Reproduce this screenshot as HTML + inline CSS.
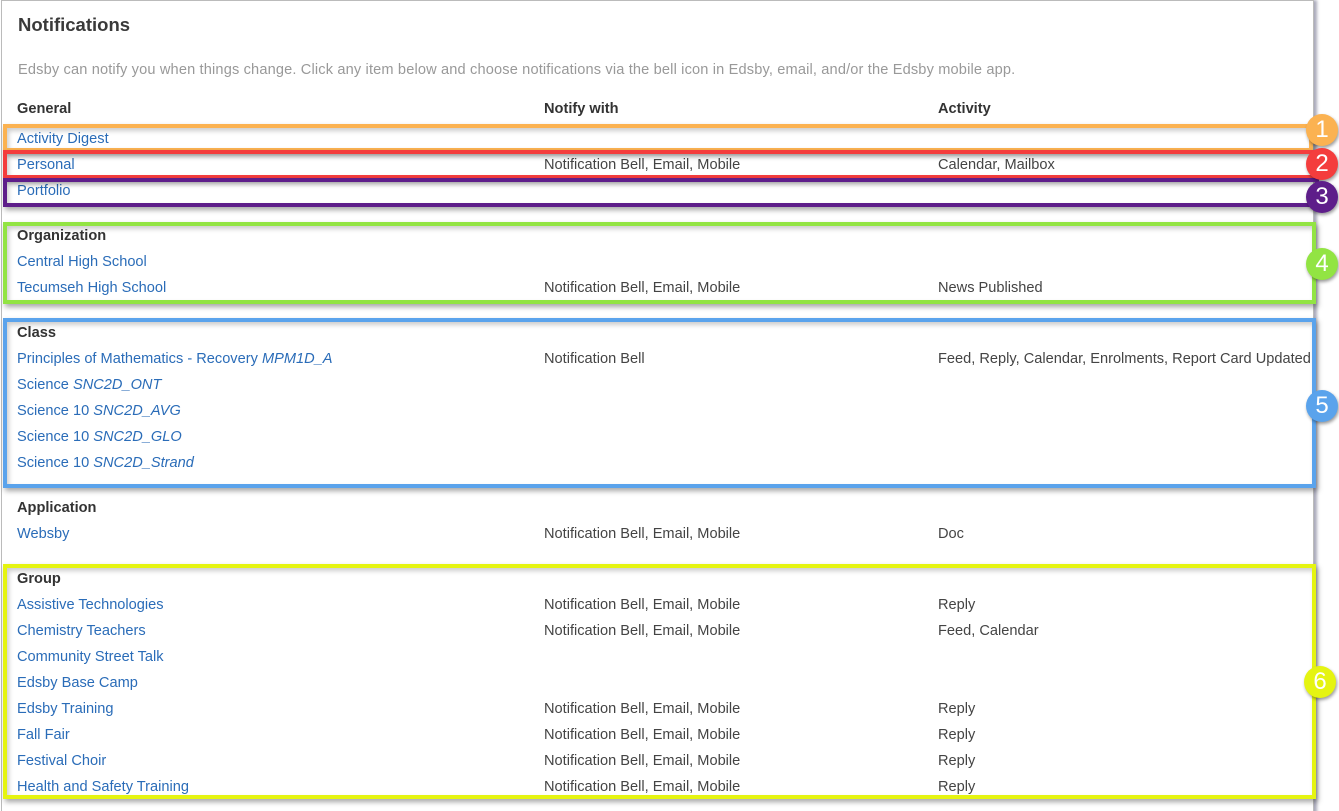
<!DOCTYPE html>
<html><head><meta charset="utf-8"><style>
html,body{margin:0;padding:0;background:#fff;width:1339px;height:811px;overflow:hidden;position:relative;font-family:"Liberation Sans",sans-serif;font-size:14.6px;}
.card{position:absolute;left:1px;top:0;width:1311px;height:830px;border:1px solid #bbb;border-bottom:none;background:#fff;box-shadow:3px 0 3px #aab}
.t{position:absolute;line-height:18px;white-space:nowrap;color:#444;margin-top:1px}
.l{color:#2a6cb8}
.h{color:#333;font-weight:bold}
i{font-style:italic}
.b{position:absolute;box-sizing:border-box;border:4px solid;box-shadow:2px 3px 5px rgba(0,0,0,.35), inset 2px 3px 5px rgba(0,0,0,.2)}
.c{position:absolute;width:32px;height:32px;border-radius:50%;color:#fff;font-size:24px;line-height:32px;text-align:center;box-shadow:1px 2px 3px rgba(0,0,0,.4)}
</style></head><body>
<div class="card"></div>
<div class="t" style="left:18px;top:12px;font-size:18.5px;line-height:24px;color:#3a3a3a;font-weight:bold">Notifications</div>
<div class="t" style="left:18px;top:60px;color:#999;letter-spacing:0.15px">Edsby can notify you when things change. Click any item below and choose notifications via the bell icon in Edsby, email, and/or the Edsby mobile app.</div>
<div class="t h" style="left:17px;top:99px">General</div>
<div class="t h" style="left:544px;top:99px">Notify with</div>
<div class="t h" style="left:938px;top:99px">Activity</div>

<div class="t l" style="left:17px;top:129px">Activity Digest</div>
<div class="t l" style="left:17px;top:155px">Personal</div>
<div class="t" style="left:544px;top:155px">Notification Bell, Email, Mobile</div>
<div class="t" style="left:938px;top:155px">Calendar, Mailbox</div>
<div class="t l" style="left:17px;top:181px">Portfolio</div>

<div class="t h" style="left:17px;top:226px">Organization</div>
<div class="t l" style="left:17px;top:252px">Central High School</div>
<div class="t l" style="left:17px;top:278px">Tecumseh High School</div>
<div class="t" style="left:544px;top:278px">Notification Bell, Email, Mobile</div>
<div class="t" style="left:938px;top:278px">News Published</div>

<div class="t h" style="left:17px;top:323px">Class</div>
<div class="t l" style="left:17px;top:349px">Principles of Mathematics - Recovery <i>MPM1D_A</i></div>
<div class="t" style="left:544px;top:349px">Notification Bell</div>
<div class="t" style="left:938px;top:349px">Feed, Reply, Calendar, Enrolments, Report Card Updated</div>
<div class="t l" style="left:17px;top:375px">Science <i>SNC2D_ONT</i></div>
<div class="t l" style="left:17px;top:401px">Science 10 <i>SNC2D_AVG</i></div>
<div class="t l" style="left:17px;top:427px">Science 10 <i>SNC2D_GLO</i></div>
<div class="t l" style="left:17px;top:453px">Science 10 <i>SNC2D_Strand</i></div>

<div class="t h" style="left:17px;top:498px">Application</div>
<div class="t l" style="left:17px;top:524px">Websby</div>
<div class="t" style="left:544px;top:524px">Notification Bell, Email, Mobile</div>
<div class="t" style="left:938px;top:524px">Doc</div>

<div class="t h" style="left:17px;top:569px">Group</div>
<div class="t l" style="left:17px;top:595px">Assistive Technologies</div>
<div class="t" style="left:544px;top:595px">Notification Bell, Email, Mobile</div>
<div class="t" style="left:938px;top:595px">Reply</div>
<div class="t l" style="left:17px;top:621px">Chemistry Teachers</div>
<div class="t" style="left:544px;top:621px">Notification Bell, Email, Mobile</div>
<div class="t" style="left:938px;top:621px">Feed, Calendar</div>
<div class="t l" style="left:17px;top:647px">Community Street Talk</div>
<div class="t l" style="left:17px;top:673px">Edsby Base Camp</div>
<div class="t l" style="left:17px;top:699px">Edsby Training</div>
<div class="t" style="left:544px;top:699px">Notification Bell, Email, Mobile</div>
<div class="t" style="left:938px;top:699px">Reply</div>
<div class="t l" style="left:17px;top:725px">Fall Fair</div>
<div class="t" style="left:544px;top:725px">Notification Bell, Email, Mobile</div>
<div class="t" style="left:938px;top:725px">Reply</div>
<div class="t l" style="left:17px;top:751px">Festival Choir</div>
<div class="t" style="left:544px;top:751px">Notification Bell, Email, Mobile</div>
<div class="t" style="left:938px;top:751px">Reply</div>
<div class="t l" style="left:17px;top:777px">Health and Safety Training</div>
<div class="t" style="left:544px;top:777px">Notification Bell, Email, Mobile</div>
<div class="t" style="left:938px;top:777px">Reply</div>

<div class="b" style="left:3px;top:124px;width:1310px;height:28px;border-color:#fbb251"></div>
<div class="b" style="left:3px;top:150px;width:1316px;height:29px;border-color:#f43d3d"></div>
<div class="b" style="left:3px;top:178px;width:1316px;height:29px;border-color:#5e1e8a"></div>
<div class="b" style="left:3px;top:222px;width:1313px;height:82px;border-color:#92e443"></div>
<div class="b" style="left:3px;top:318px;width:1313px;height:170px;border-color:#5aa3ec"></div>
<div class="b" style="left:3px;top:564px;width:1313px;height:235px;border-color:#e5f411"></div>

<div class="c" style="left:1306px;top:114px;background:#fbb251">1</div>
<div class="c" style="left:1306px;top:148px;background:#f43d3d">2</div>
<div class="c" style="left:1306px;top:181px;background:#5e1e8a">3</div>
<div class="c" style="left:1306px;top:248px;background:#92e443">4</div>
<div class="c" style="left:1306px;top:390px;background:#5aa3ec">5</div>
<div class="c" style="left:1304px;top:666px;background:#e5f411">6</div>
</body></html>
